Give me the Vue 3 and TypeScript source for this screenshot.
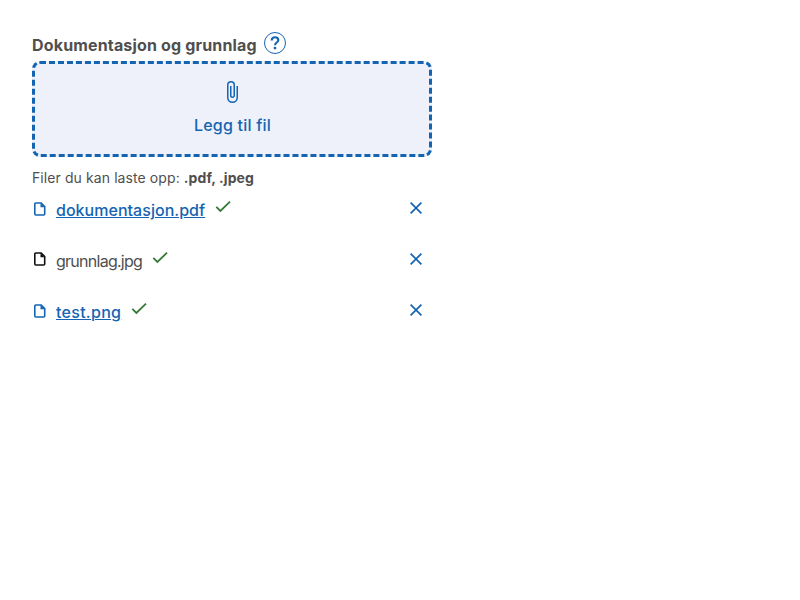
<script setup lang="ts">
interface UploadedFile { name: string; link: boolean; tracking: string }
const files: UploadedFile[] = [
  { name: 'dokumentasjon.pdf', link: true, tracking: '0.03px' },
  { name: 'grunnlag.jpg', link: false, tracking: '-0.74px' },
  { name: 'test.png', link: true, tracking: '0.28px' },
]
</script>

<template>
  <main class="uploader">
    <div class="label-row">
      <span class="label">Dokumentasjon og grunnlag</span>
      <button class="help" aria-label="Hjelp">
        <svg width="22" height="22" viewBox="0 0 22 22" fill="none" stroke="currentColor">
          <circle cx="11" cy="11" r="10.5" />
          <path d="M7.700 8.400C7.700 6.500 9.100 5.300 11 5.300s3.300 1.200 3.300 2.900c0 2.200-3.300 2.500-3.300 5" stroke-width="2.100" />
          <circle cx="11" cy="16.100" r="1.400" fill="currentColor" stroke="none" />
        </svg>
      </button>
    </div>
    <button class="dropzone">
      <svg width="24" height="24" viewBox="0 0 24 24" fill="none" stroke="currentColor" stroke-width="1.500">
        <path d="M17.250 6v11.500a4.750 4.750 0 0 1-9.500 0V5a3.250 3.250 0 0 1 6.500 0v10.500a1.750 1.750 0 0 1-3.500 0V6" />
      </svg>
      <span class="action">Legg til fil</span>
    </button>
    <p class="hint">Filer du kan laste opp: <strong>.pdf, .jpeg</strong></p>
    <ul class="files">
      <li v-for="file in files" :key="file.name" class="file">
        <svg class="doc" :class="{ linked: file.link }" width="16" height="16" viewBox="0 0 16 16" fill="none" stroke="currentColor" stroke-width="1.600">
          <path d="M3.800 2h5.400l3.500 3.500v7.500a1 1 0 0 1-1 1H3.800a1 1 0 0 1-1-1V3a1 1 0 0 1 1-1z" />
          <path d="M8.500 2v4.200h4.200z" fill="currentColor" stroke="none" />
        </svg>
        <a v-if="file.link" class="name link" href="#" :style="{ letterSpacing: file.tracking }">{{ file.name }}</a>
        <span v-else class="name" :style="{ letterSpacing: file.tracking }">{{ file.name }}</span>
        <svg class="check" width="16" height="12" viewBox="0 0 16 12" fill="none" stroke="currentColor" stroke-width="1.800"><path d="m1.300 5.900 4.100 4.100L15 .700" /></svg>
        <button class="remove" aria-label="Fjern">
          <svg width="12" height="12" viewBox="0 0 12 12" fill="none" stroke="currentColor" stroke-width="1.700"><path d="m.6.6 10.800 10.800M11.400.6.6 11.400" /></svg>
        </button>
      </li>
    </ul>
  </main>
</template>

<style>
body { margin: 0; background: #fff; }
</style>
<style scoped>
.uploader { box-sizing: border-box; width: 464px; padding: 32px; font: 16px/24px Inter, sans-serif; color: #4f4f4f; }
button { border: 0; background: none; padding: 0; color: #1464b2; font: inherit; }
svg { display: block; }
.label-row { display: flex; gap: 7px; height: 29px; }
.label { font-weight: 700; padding-top: 1px; letter-spacing: .16px; }
.help { height: 22px; }
.dropzone { box-sizing: border-box; width: 400px; height: 96px; border: 3px dashed #1464b2; border-radius: 8px; background: #eef1fa; display: flex; flex-direction: column; align-items: center; padding-top: 16px; gap: 9px; font-weight: 500; }
.action { letter-spacing: .22px; padding-left: 1px; }
.hint { margin: 9px 0 0; font-size: 14px; letter-spacing: .09px; }
.files { list-style: none; margin: 8px 0 0; padding: 0; }
.file { display: flex; height: 51px; }
.doc { margin-top: 3px; color: #111; }
.file:nth-child(2) .doc { margin-top: 2px; }
.doc.linked { color: #1464b2; }
.name { margin-left: 8px; }
.link { color: #1464b2; font-weight: 500; text-decoration: underline; }
.check { margin: 3px 0 0 10px; color: #347a36; }
.remove { height: 12px; margin: 4px 10px 0 auto; }
</style>
